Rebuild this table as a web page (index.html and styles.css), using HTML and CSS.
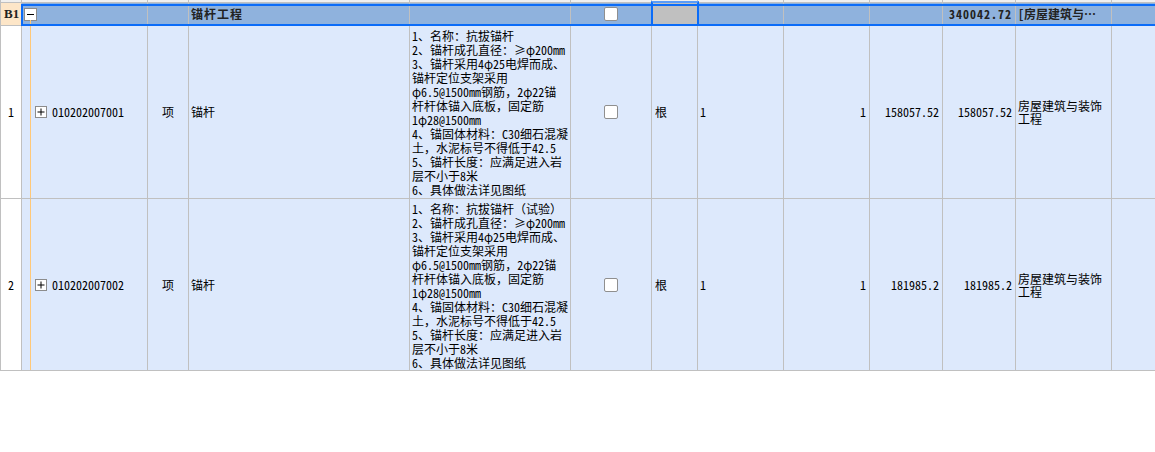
FILE: index.html
```html
<!DOCTYPE html>
<html lang="zh-CN">
<head>
<meta charset="utf-8">
<title>锚杆工程</title>
<link rel="stylesheet" href="styles.css">
</head>
<body>
<div class="grid">
  <div class="row head">
    <div class="c"></div><div class="c"></div><div class="c"></div><div class="c"></div><div class="c"></div><div class="c"></div><div class="c"></div><div class="c"></div><div class="c"></div><div class="c"></div><div class="c"></div><div class="c"></div><div class="c"></div>
  </div>
  <div class="row group">
    <div class="c idx-g">B1</div>
    <div class="c tree-g">
      <svg class="tog" width="13" height="13" viewBox="0 0 13 13"><rect x="0.5" y="0.5" width="12" height="12" fill="#fff" stroke="#8c8c8c"/><path d="M3 6.5h7" stroke="#000" stroke-width="1"/></svg>
    </div>
    <div class="c"></div>
    <div class="c name-g">锚杆工程</div>
    <div class="c"></div>
    <div class="c mid"><span class="chk"></span></div>
    <div class="c sel"></div>
    <div class="c"></div>
    <div class="c"></div>
    <div class="c"></div>
    <div class="c right bold num">340042.72</div>
    <div class="c bold ell"><span class="ellt">[房屋建筑与装饰工程]</span></div>
    <div class="c"></div>
  </div>
  <div class="row item r1">
    <div class="c mid idx">1</div>
    <div class="c tree">
      <svg class="tog" width="12" height="12" viewBox="0 0 12 12"><rect x="0.5" y="0.5" width="11" height="11" fill="#fff" stroke="#8c8c8c"/><path d="M2.5 6h7M6 2.5v7" stroke="#000" stroke-width="1"/></svg>
      <span class="code">010202007001</span>
    </div>
    <div class="c mid">项</div>
    <div class="c">锚杆</div>
    <div class="c desc">1、名称：抗拔锚杆<br>2、锚杆成孔直径：≥φ200mm<br>3、锚杆采用4φ25电焊而成、<br>锚杆定位支架采用<br>φ6.5@1500mm钢筋<span class="fw">，</span>2φ22锚<br>杆杆体锚入底板<span class="fw">，</span>固定筋<br>1φ28@1500mm<br>4、锚固体材料：C30细石混凝<br>土<span class="fw">，</span>水泥标号不得低于42.5<br>5、锚杆长度：应满足进入岩<br>层不小于8米<br>6、具体做法详见图纸</div>
    <div class="c mid"><span class="chk"></span></div>
    <div class="c unit">根</div>
    <div class="c">1</div>
    <div class="c right">1</div>
    <div class="c right">158057.52</div>
    <div class="c right">158057.52</div>
    <div class="c wrap">房屋建筑与装饰工程</div>
    <div class="c"></div>
  </div>
  <div class="row item r2">
    <div class="c mid idx">2</div>
    <div class="c tree">
      <svg class="tog" width="12" height="12" viewBox="0 0 12 12"><rect x="0.5" y="0.5" width="11" height="11" fill="#fff" stroke="#8c8c8c"/><path d="M2.5 6h7M6 2.5v7" stroke="#000" stroke-width="1"/></svg>
      <span class="code">010202007002</span>
    </div>
    <div class="c mid">项</div>
    <div class="c">锚杆</div>
    <div class="c desc">1、名称：抗拔锚杆<span class="fw">（</span>试验<span class="fw">）</span><br>2、锚杆成孔直径：≥φ200mm<br>3、锚杆采用4φ25电焊而成、<br>锚杆定位支架采用<br>φ6.5@1500mm钢筋<span class="fw">，</span>2φ22锚<br>杆杆体锚入底板<span class="fw">，</span>固定筋<br>1φ28@1500mm<br>4、锚固体材料：C30细石混凝<br>土<span class="fw">，</span>水泥标号不得低于42.5<br>5、锚杆长度：应满足进入岩<br>层不小于8米<br>6、具体做法详见图纸</div>
    <div class="c mid"><span class="chk"></span></div>
    <div class="c unit">根</div>
    <div class="c">1</div>
    <div class="c right">1</div>
    <div class="c right">181985.2</div>
    <div class="c right">181985.2</div>
    <div class="c wrap">房屋建筑与装饰工程</div>
    <div class="c"></div>
  </div>
  <div class="frame"></div>
</div>
</body>
</html>
```

FILE: styles.css
```css
html, body {
  margin: 0;
  padding: 0;
  background: #ffffff;
  overflow: hidden;
}
body {
  font-family: "Noto Sans CJK SC", "Noto Sans", sans-serif;
  font-size: 12px;
  color: #000;
  font-feature-settings: "hwid" 1;
}
.fw {
  font-feature-settings: normal;
}
.grid {
  position: relative;
  width: 1171px;
}
.row {
  display: grid;
  grid-template-columns: 22px 126px 41px 221px 161px 81px 46px 86px 86px 73px 73px 96px 60px;
}
.c {
  box-sizing: border-box;
  border-right: 1px solid #c0c0c0;
  border-bottom: 1px solid #c0c0c0;
  display: flex;
  align-items: center;
  overflow: hidden;
  white-space: nowrap;
  padding: 0 2px;
  line-height: 14px;
}
.c:first-child {
  border-left: 1px solid #c0c0c0;
}
.head {
  height: 3px;
}
.head .c {
  background: #f0f0f0;
}
.group {
  height: 23px;
  background: #8fb2dd;
}
.group .c {
  border-bottom-color: #8fb2dd;
}
.idx-g {
  background: #fde6c8;
  font-family: "Liberation Serif", serif;
  font-weight: bold;
  font-size: 13px;
  color: #222;
  padding-left: 3px;
  border-bottom-color: #c0c0c0 !important;
}
.tree-g {
  position: relative;
  padding-left: 2px;
}
.tree-g::after {
  content: "";
  position: absolute;
  left: 8px;
  top: 17px;
  bottom: -1px;
  width: 1px;
  background: #ffc878;
}
.name-g {
  font-weight: bold;
  color: #222;
  letter-spacing: 1px;
  padding-left: 2px;
}
.bold {
  font-weight: bold;
  color: #222;
}
.num {
  letter-spacing: 1px;
}
.ell {
  padding-left: 2px;
}
.ellt {
  display: block;
  overflow: hidden;
  text-overflow: ellipsis;
  white-space: nowrap;
  width: 86px;
}
.sel {
  background: #c0c0c0;
  position: relative;
  overflow: visible;
}
.sel::after {
  content: "";
  position: absolute;
  left: -1px;
  right: -2px;
  top: -2px;
  bottom: -1px;
  border: 2px solid #0b6cf8;
  border-top: 2px solid #5a9cf8;
}
.item {
  background: #dde9fc;
}
.r1 {
  height: 173px;
}
.r2 {
  height: 172px;
}
.idx {
  background: #ffffff;
}
.mid {
  justify-content: center;
}
.right {
  justify-content: flex-end;
  padding-right: 3px;
}
.tree {
  padding-left: 13px;
  gap: 5px;
  background: linear-gradient(#ffc878, #ffc878) no-repeat 8px 0 / 1px 100%;
}
.tog {
  display: block;
  flex: none;
}
.desc {
  display: block;
  padding: 3px 2px 0 2px;
}
.unit {
  padding-left: 3px;
}
.wrap {
  white-space: normal;
  padding-left: 2px;
  line-height: 13px;
}
.chk {
  display: block;
  width: 14px;
  height: 14px;
  box-sizing: border-box;
  background: #fff;
  border: 1px solid #8f8f8f;
  border-radius: 2px;
}
.frame {
  position: absolute;
  left: 21px;
  top: 4px;
  right: 0;
  height: 22px;
  box-sizing: border-box;
  border: 2px solid #0b6cf8;
  pointer-events: none;
}
```
